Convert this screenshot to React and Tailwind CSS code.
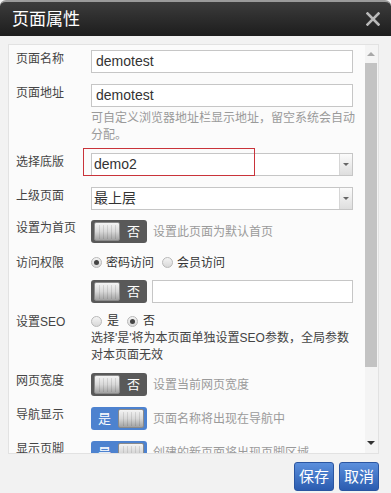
import React from "react";

const CJK = { fontFamily: '"Liberation Sans", "Noto Sans CJK SC", sans-serif' };

function Knob() {
  return (
    <div className="w-[26px] h-[19px] rounded-[2px] bg-gradient-to-b from-[#f4f4f4] via-[#d8d8d8] to-[#a2a2a2] border border-[#8a8a8a] flex items-center justify-center gap-[3px]">
      <div className="w-px h-[14px] bg-[#000000]/10" />
      <div className="w-px h-[14px] bg-[#000000]/10" />
      <div className="w-px h-[14px] bg-[#000000]/10" />
      <div className="w-px h-[14px] bg-[#000000]/10" />
      <div className="w-px h-[14px] bg-[#000000]/10" />
    </div>
  );
}

function Toggle({ on }) {
  if (on) {
    return (
      <div className="w-[56px] h-[23px] shrink-0 rounded-[3px] bg-[#4d82cf] flex items-center pl-[7px] pr-[3px] justify-between">
        <span className="text-white text-[13px] leading-none">是</span>
        <Knob />
      </div>
    );
  }
  return (
    <div className="w-[56px] h-[23px] shrink-0 rounded-[3px] bg-[#595959] flex items-center pl-[3px] pr-[7px] justify-between">
      <Knob />
      <span className="text-white text-[13px] leading-none">否</span>
    </div>
  );
}

function Radio({ checked }) {
  return (
    <span className="w-[11px] h-[11px] shrink-0 rounded-full border border-[#b8b8b8] bg-gradient-to-b from-[#f4f4f4] to-[#d8d8d8] flex items-center justify-center">
      {checked && <span className="w-[5px] h-[5px] rounded-full bg-[#444]" />}
    </span>
  );
}

function Row({ label, children, pt = "pt-0", className = "" }) {
  return (
    <div className={"flex items-start " + className}>
      <div className={"w-[75px] shrink-0 text-[12px] leading-[16px] text-[#444] " + pt}>{label}</div>
      <div className="flex-1 min-w-0">{children}</div>
    </div>
  );
}

function Input({ value }) {
  return (
    <div className="w-[262px] h-[23px] border border-[#c6c6c6] bg-white flex items-center px-[4px] text-[14px] text-[#333]">
      {value}
    </div>
  );
}

function Select({ value }) {
  return (
    <div className="w-[262px] h-[23px] border border-[#c6c6c6] bg-white flex items-center text-[14px] text-[#333]">
      <div className="flex-1 px-[2px]">{value}</div>
      <div className="w-[13px] h-full border-l border-[#d6d6d6] bg-gradient-to-b from-[#fbfbfb] to-[#dedede] flex items-center justify-center">
        <div className="w-0 h-0 border-l-[3px] border-r-[3px] border-t-[3px] border-l-transparent border-r-transparent border-t-[#666]" />
      </div>
    </div>
  );
}

export default function App() {
  return (
    <div className="w-[391px] h-[493px] bg-[#f2f2f2] flex flex-col overflow-hidden" style={CJK}>
      {/* title bar */}
      <div className="h-[36px] shrink-0 bg-gradient-to-b from-[#3c3c3c] to-[#1d1d1d] border-t-2 border-[#9a9a9a] rounded-t-[6px] flex items-center justify-between pl-[12px] pr-[11px]">
        <span className="text-white text-[17px] leading-none">页面属性</span>
        <svg width="14" height="14" viewBox="0 0 14 14">
          <path d="M1.5 1.5 L12.5 12.5 M12.5 1.5 L1.5 12.5" stroke="#b9b9b9" strokeWidth="2.6" strokeLinecap="square" />
        </svg>
      </div>

      {/* body */}
      <div className="flex-1 pt-[8px] pl-[8px] pr-[12px] flex flex-col">
        <div className="h-[410px] shrink-0 bg-[#fbfbfb] border border-[#e2e2e2] flex">
          <div className="flex-1 overflow-hidden pl-[7px] pt-[5px] relative">
            <Row label="页面名称" pt="pt-[1px]" className="mb-[11px]">
              <Input value="demotest" />
            </Row>
            <Row label="页面地址" pt="pt-[1px]" className="mb-[9px]">
              <Input value="demotest" />
              <div className="mt-[3px] w-[264px] text-[12px] leading-[17px] text-[#9a9a9a]">
                可自定义浏览器地址栏显示地址，留空系统会自动分配。
              </div>
            </Row>
            <Row label="选择底版" pt="pt-[1px]" className="mb-[11px] relative">
              <Select value="demo2" />
              <div className="absolute left-[67px] top-[-5px] w-[172px] h-[28px] border border-[#c9333a]" />
            </Row>
            <Row label="上级页面" pt="pt-[1px]" className="mb-[10px]">
              <Select value="最上层" />
            </Row>
            <Row label="设置为首页" pt="pt-[0px]" className="mb-[10px]">
              <div className="flex items-center gap-[6px]">
                <Toggle />
                <span className="text-[12px] text-[#9a9a9a]">设置此页面为默认首页</span>
              </div>
            </Row>
            <Row label="访问权限" pt="pt-[2px]" className="mb-[8px]">
              <div className="h-[19px] flex items-center text-[12px] text-[#333]">
                <Radio checked />
                <span className="ml-[4px]">密码访问</span>
                <span className="ml-[8px]"><Radio /></span>
                <span className="ml-[4px]">会员访问</span>
              </div>
            </Row>
            <Row label="" className="mb-[9px]">
              <div className="flex items-center gap-[5px]">
                <Toggle />
                <div className="w-[201px] h-[23px] border border-[#c6c6c6] bg-white" />
              </div>
            </Row>
            <Row label="设置SEO" pt="pt-[2px]" className="mb-[9px]">
              <div className="h-[18px] flex items-center text-[12px] text-[#333]">
                <Radio />
                <span className="ml-[5px]">是</span>
                <span className="ml-[8px]"><Radio checked /></span>
                <span className="ml-[5px]">否</span>
              </div>
              <div className="w-[262px] text-[12px] leading-[17px] text-[#444]">
                选择'是'将为本页面单独设置SEO参数，全局参数对本页面无效
              </div>
            </Row>
            <Row label="网页宽度" pt="pt-[0px]" className="mb-[11px]">
              <div className="flex items-center gap-[6px]">
                <Toggle />
                <span className="text-[12px] text-[#9a9a9a]">设置当前网页宽度</span>
              </div>
            </Row>
            <Row label="导航显示" pt="pt-[0px]" className="mb-[11px]">
              <div className="flex items-center gap-[6px]">
                <Toggle on />
                <span className="text-[12px] text-[#9a9a9a]">页面名称将出现在导航中</span>
              </div>
            </Row>
            <Row label="显示页脚" pt="pt-[0px]">
              <div className="flex items-center gap-[6px]">
                <Toggle on />
                <span className="text-[12px] text-[#9a9a9a]">创建的新页面将出现页脚区域</span>
              </div>
            </Row>
          </div>
          {/* scrollbar */}
          <div className="w-[13px] shrink-0 flex flex-col items-center bg-[#f4f4f4] pr-px">
            <div className="h-[18px] flex items-center justify-center">
              <div className="w-0 h-0 border-l-[4px] border-r-[4px] border-b-[4px] border-l-transparent border-r-transparent border-b-[#a8a8a8]" />
            </div>
            <div className="w-[12px] h-[304px] bg-[#c3c3c3]" />
            <div className="flex-1" />
            <div className="h-[14px] flex items-center justify-center mb-[3px]">
              <div className="w-0 h-0 border-l-[4px] border-r-[4px] border-t-[4px] border-l-transparent border-r-transparent border-t-[#333]" />
            </div>
          </div>
        </div>

        {/* footer */}
        <div className="flex justify-end gap-[5px] pt-[8px]">
          <button className="w-[40px] h-[29px] rounded-[3px] border border-[#2a55a0] bg-gradient-to-b from-[#5b8fdc] to-[#2b5cb0] text-white text-[15px] leading-none">保存</button>
          <button className="w-[40px] h-[29px] rounded-[3px] border border-[#2a55a0] bg-gradient-to-b from-[#5b8fdc] to-[#2b5cb0] text-white text-[15px] leading-none">取消</button>
        </div>
      </div>
    </div>
  );
}
